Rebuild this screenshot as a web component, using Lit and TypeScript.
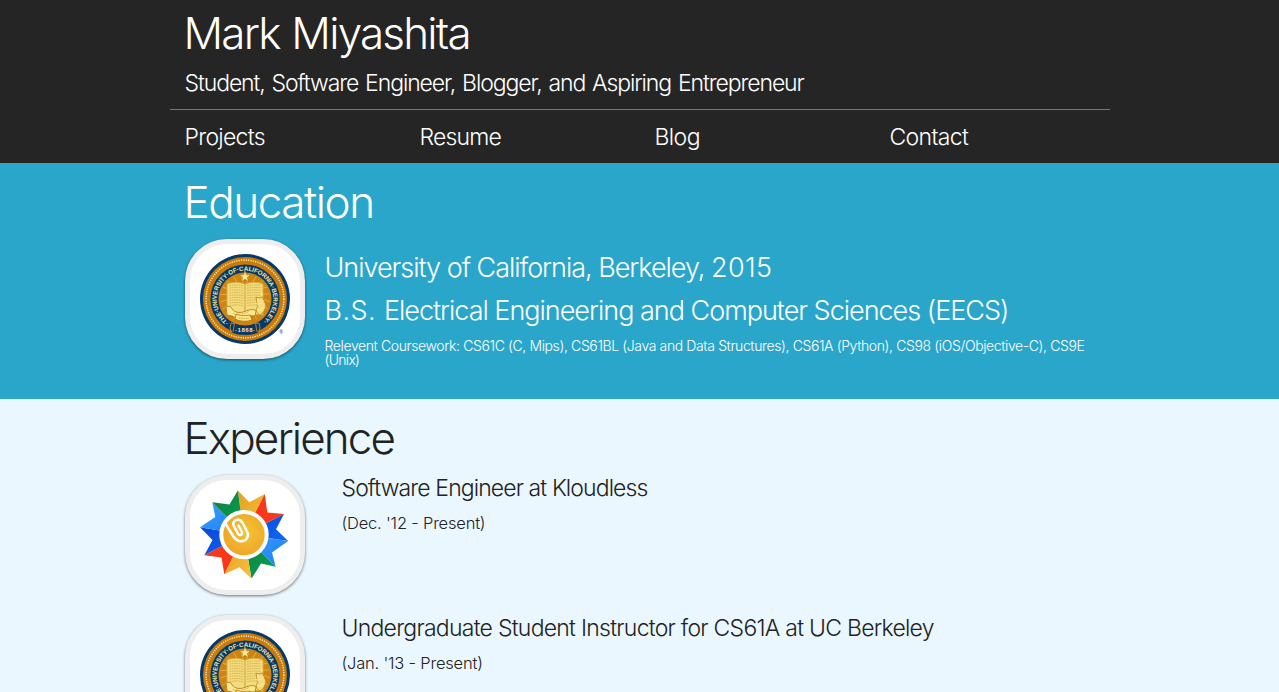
import { LitElement, html, css, svg } from "lit";
import { customElement } from "lit/decorators.js";

const tileStyles = css`
  :host {
    display: block;
    box-sizing: border-box;
    flex: none;
    width: 120px;
    height: 120px;
    padding: 10px;
    border: 5px solid #eeeeee;
    border-radius: 42px;
    background: #ffffff;
    box-shadow: 0 1px 3px rgba(0, 0, 0, 0.55);
  }
  svg {
    display: block;
    width: 90px;
    height: 90px;
    overflow: visible;
  }
`;

@customElement("berkeley-seal")
class BerkeleySeal extends LitElement {
  static styles = [
    tileStyles,
    css`
      .ring-text {
        font: 700 6.2px "Liberation Sans", Arial, sans-serif;
        fill: #f4e9a0;
      }
      .year {
        font: 700 6px "Liberation Sans", Arial, sans-serif;
        fill: #f4e9a0;
      }
      .mark {
        font: 700 5px "Liberation Sans", Arial, sans-serif;
        fill: #44698c;
      }
    `,
  ];

  render() {
    const rays = Array.from({ length: 20 }, (_, i) => {
      const a = (i * Math.PI) / 10 + 0.15;
      return svg`<line x1="45" y1="40" x2=${45 + 25 * Math.cos(a)} y2=${44 + 24 * Math.sin(a)} stroke="#e9b04a" stroke-width="0.9" />`;
    });
    const lines = Array.from({ length: 9 }, (_, i) => {
      const y = 31.5 + i * 2.5;
      return svg`<path d="M29.5 ${y}q7-1.2 14 .3M47 ${y + 0.3}q7-1.5 14-.3" />`;
    });
    return html`
      <svg viewBox="0 0 90 90" role="img" aria-label="University of California, Berkeley">
        <circle cx="45" cy="45" r="45" fill="#06396b" />
        <circle cx="45" cy="45" r="42" fill="#c87a0a" />
        <circle cx="45" cy="45" r="38.9" fill="none" stroke="#f8e3a8" stroke-width="1.5" stroke-dasharray="1.3 1.085" />
        <circle cx="45" cy="45" r="34.6" fill="#06396b" />
        <circle cx="45" cy="45" r="26.5" fill="#cd8412" />
        ${rays}
        <path id="arc" d="M28.8 68.2A28.3 28.3 0 1 1 61.2 68.2" fill="none" />
        <text class="ring-text" textLength="141" lengthAdjust="spacing"><textPath href="#arc" textLength="141">·THE·UNIVERSITY·OF·CALIFORNIA·BERKELEY·</textPath></text>
        <path d="M27 30q9-3.5 18 0q9-3.5 18 0V61q-9-2-18 1q-9-3-18-1z" fill="#f3dc7c" stroke="#d9a93a" stroke-width="1" />
        <path d="M45 30V61" stroke="#c99a35" stroke-width="0.9" />
        <g fill="none" stroke="#cfa648" stroke-width="0.8" stroke-dasharray="1.7 .6">${lines}</g>
        <path d="M45 16.3l1.5 4.4h4.3l-3.5 2.7 1.4 4.6-3.7-2.8-3.7 2.8 1.4-4.6-3.5-2.7h4.3z" fill="#fae98e" stroke="#a8680c" stroke-width="0.6" />
        <path d="M56 43q3 2 6 0q3 4 4 9q-1 6-6 9q-4-2-4-6q3-2 1-5z" fill="#f3dc7c" stroke="#b57a18" stroke-width="0.7" />
        <path d="M55 49q3 3 7 0M58 44v5M57 56q4 1 7-3M62 42v-3" fill="none" stroke="#f9ec9c" stroke-width="1" />
        <path d="M26 53q5-2 6 2q5 6 14 2q7-3 10 0l-1 5q-5-1-8 1q-9 3-15-1l-5-1z" fill="#fae98e" stroke="#a8680c" stroke-width="0.7" />
        <path d="M36 60q7 3 14 1l2 5q-9 3-17-1z" fill="#f9e68a" stroke="#a8680c" stroke-width="0.7" />
        <path d="M33 59q2 2 5 2M42 60q4-1 7-2.5M39 64q5 1 10 0" fill="none" stroke="#c2902e" stroke-width="0.9" stroke-dasharray="1 .7" />
        <path d="M32.5 70.5q12.5 4.5 25 0l1.5 8q-14 5-28 0z" fill="#06396b" />
        <path d="M34.5 69.5l-3.5-.5-1 5 2 5M55.5 69.5l3.5-.5 1 5-2 5M34.5 69.5l-1.5 8.5M55.5 69.5l1.5 8.5" fill="none" stroke="#c98a1c" stroke-width="0.9" />
        <text class="year" x="45" y="78.2" text-anchor="middle" textLength="20">·1868·</text>
        <text class="mark" x="81" y="79.5" text-anchor="middle">®</text>
      </svg>
    `;
  }
}

@customElement("kloudless-logo")
class KloudlessLogo extends LitElement {
  static styles = tileStyles;

  render() {
    return html`
      <svg viewBox="0 0 90 90" role="img" aria-label="Kloudless">
        <defs>
          <radialGradient id="disc" cx=".55" cy=".45" r=".6">
            <stop offset="0" stop-color="#f3c535" />
            <stop offset="1" stop-color="#efa127" />
          </radialGradient>
          <linearGradient id="gold" x1="0" y1="0" x2="1" y2="1">
            <stop offset="0" stop-color="#e59f20" />
            <stop offset="1" stop-color="#f8c13a" />
          </linearGradient>
          <linearGradient id="sky" x1="0" y1="0" x2="1" y2="1">
            <stop offset="0" stop-color="#3f9bff" />
            <stop offset="1" stop-color="#1682f2" />
          </linearGradient>
          <linearGradient id="royal" x1="0" y1="0" x2="1" y2="1">
            <stop offset="0" stop-color="#0b45d0" />
            <stop offset="1" stop-color="#1168fa" />
          </linearGradient>
          <linearGradient id="green" x1="0" y1="0" x2="1" y2="1">
            <stop offset="0" stop-color="#0c7d3f" />
            <stop offset="1" stop-color="#08a558" />
          </linearGradient>
        </defs>
        <path d="M44 44.6L37.8.5 49.3 12.3 64.8 4z" fill="url(#gold)" />
        <path d="M44 44.6L64.8 4 67.3 22.5 84 24z" fill="#f6381b" />
        <path d="M44 44.6L84 24 76 39.2 88.2 51z" fill="url(#royal)" />
        <path d="M44 44.6L88.2 51 72 62.5 75.7 76.8z" fill="url(#sky)" />
        <path d="M44 44.6L75.7 76.8 61 73.6 51.5 88.7z" fill="url(#green)" />
        <path d="M44 44.6L51.5 88.7 39.4 77.3 24.3 84.3z" fill="url(#gold)" />
        <path d="M44 44.6L24.3 84.3 21.5 67.5 4.3 65.3z" fill="#f6381b" />
        <path d="M44 44.6L4.3 65.3 12.5 50 0 37.3z" fill="url(#royal)" />
        <path d="M44 44.6L0 37.3 15.3 27 12.3 12.3z" fill="url(#sky)" />
        <path d="M44 44.6L12.3 12.3 29.5 14.5 37.8.5z" fill="url(#green)" />
        <circle cx="44" cy="44.6" r="22.7" fill="url(#disc)" stroke="#fff" stroke-width="4" />
        <path d="M26 34.5L33 46C36.5 51.5 42 52.5 45.3 50C48.5 47.5 48.3 44 46.8 41L42.7 33C40.5 29.3 37 29 35 30.5C33 32 33 34.5 34.2 36.7L37.8 43.3C39 45.3 41 45.3 41.8 44.2C42.4 43.4 42.2 42.5 41.7 41.5L38.5 35.5" fill="none" stroke="#fff" stroke-width="2.5" stroke-linecap="round" />
      </svg>
    `;
  }
}

@customElement("app-root")
class AppRoot extends LitElement {
  static styles = css`
    :host {
      display: block;
      height: 692px;
      overflow: hidden;
      background: #eaf7ff;
      color: #222222;
      font-family: Inter, "Helvetica Neue", sans-serif;
      font-weight: 300;
    }
    h1, h2, h3, p { margin: 0; font-weight: 300; white-space: nowrap; }
    .wrap { box-sizing: border-box; width: 940px; margin: 0 auto; padding: 0 15px; }
    header { height: 163px; background: #252525; color: #ffffff; }
    .masthead { box-sizing: border-box; height: 109px; padding-top: 11px; }
    h1, h2 { margin-left: -1px; font-size: 44px; line-height: 44px; }
    h1 { letter-spacing: -1.8px; word-spacing: 1.2px; }
    .tagline { margin-top: 16px; font-size: 23px; line-height: 24px; letter-spacing: -1.1px; word-spacing: 1.5px; }
    nav .items { display: grid; grid-template-columns: repeat(4, 235px); padding-top: 15px; font-size: 23px; line-height: 24px; }
    nav.wrap { border-top: 1px solid #777777; }
    nav a { color: inherit; text-decoration: none; }
    .projects { letter-spacing: -0.72px; }
    .resume { letter-spacing: -0.8px; }
    .blog { letter-spacing: -0.6px; }
    .contact { letter-spacing: -0.65px; }
    section { padding-top: 17px; }
    .education { box-sizing: border-box; height: 236px; background: #2ba6cb; color: #ffffff; }
    .education h2 { letter-spacing: -1.45px; }
    .experience h2 { letter-spacing: -1.9px; }
    .row { display: flex; margin-top: 15px; }
    .school { margin-left: 20px; padding-top: 15px; }
    .school h3 { font-size: 27px; line-height: 28px; letter-spacing: -1.02px; }
    .school .year { letter-spacing: 0.4px; }
    .school .degree { margin: 15px 0 14px; letter-spacing: -1.01px; }
    .degree .abbr { letter-spacing: 0.4px; }
    .courses { font-size: 14px; line-height: 14px; letter-spacing: -0.38px; }
    .courses .last { letter-spacing: -0.7px; }
    .job { margin-left: 37px; padding-top: 1px; }
    .job h3 { font-size: 23px; line-height: 24px; letter-spacing: -0.9px; }
    .job .long { letter-spacing: -0.74px; }
    .job p { margin-top: 14px; font-size: 16.5px; line-height: 18px; letter-spacing: -0.2px; }
    .row + .row { margin-top: 20px; }
  `;

  render() {
    return html`
      <header>
        <div class="wrap masthead">
          <h1>Mark Miyashita</h1>
          <p class="tagline">Student, Software Engineer, Blogger, and Aspiring Entrepreneur</p>
        </div>
        <nav class="wrap">
          <div class="items">
            <a class="projects">Projects</a>
            <a class="resume">Resume</a>
            <a class="blog">Blog</a>
            <a class="contact">Contact</a>
          </div>
        </nav>
      </header>
      <section class="education">
        <div class="wrap">
          <h2>Education</h2>
          <div class="row">
            <berkeley-seal></berkeley-seal>
            <div class="school">
              <h3>University of California, Berkeley, <span class="year">2015</span></h3>
              <h3 class="degree"><span class="abbr">B.S. </span>Electrical Engineering and Computer Sciences (EECS)</h3>
              <p class="courses">Relevent Coursework: CS61C (C, Mips), CS61BL (Java and Data Structures), CS61A (Python), CS98 (iOS/Objective-C), CS9E<br /><span class="last">(Unix)</span></p>
            </div>
          </div>
        </div>
      </section>
      <section class="experience">
        <div class="wrap">
          <h2>Experience</h2>
          <div class="row">
            <kloudless-logo></kloudless-logo>
            <div class="job">
              <h3>Software Engineer at Kloudless</h3>
              <p>(Dec. '12 - Present)</p>
            </div>
          </div>
          <div class="row">
            <berkeley-seal></berkeley-seal>
            <div class="job">
              <h3 class="long">Undergraduate Student Instructor for CS61A at UC Berkeley</h3>
              <p>(Jan. '13 - Present)</p>
            </div>
          </div>
        </div>
      </section>
    `;
  }
}
